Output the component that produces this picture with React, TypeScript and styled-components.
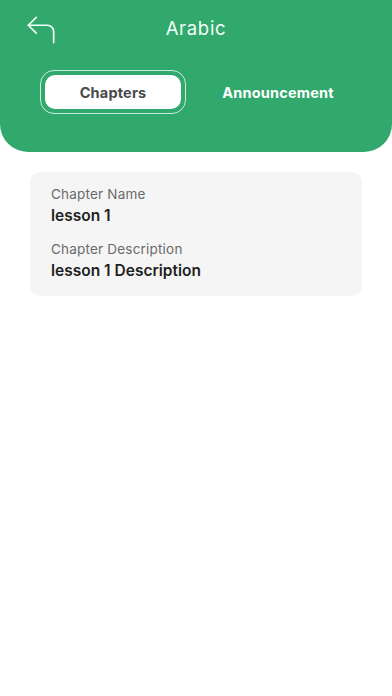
import React, { useState } from "react";
import styled, { createGlobalStyle } from "styled-components";
import { CornerUpLeft } from "lucide-react";

const GlobalStyle = createGlobalStyle`
  html, body {
    margin: 0;
    padding: 0;
    background: #ffffff;
    font-family: "Inter", "Noto Sans", sans-serif;
  }
  * { box-sizing: border-box; }
`;

const Page = styled.div`
  width: 100%;
  min-height: 696px;
  background: #ffffff;
`;

const Header = styled.header`
  background: #31a86c;
  height: 152px;
  border-radius: 0 0 28px 28px;
  padding-top: 8px;
`;

const TopBar = styled.div`
  position: relative;
  height: 40px;
  display: flex;
  align-items: center;
  justify-content: center;
`;

const BackButton = styled.button`
  position: absolute;
  left: 22px;
  top: 3px;
  background: none;
  border: none;
  padding: 0;
  color: #f2fff8;
  display: flex;
  cursor: pointer;
`;

const Title = styled.h1`
  margin: 0;
  font-size: 18.5px;
  font-weight: 400;
  color: #f4fff9;
  letter-spacing: 0.7px;
`;

const Tabs = styled.div`
  display: flex;
  gap: 19px;
  padding: 0 41px 0 40px;
  margin-top: 22px;
`;

const Tab = styled.button<{ $active: boolean }>`
  flex: 1;
  height: 44px;
  border-radius: 14px;
  border: 1.5px solid ${(p) => (p.$active ? "rgba(255,255,255,0.75)" : "transparent")};
  background: transparent;
  padding: 4px;
  cursor: pointer;
  font-family: "Inter", "Noto Sans", sans-serif;
`;

const TabLabel = styled.span<{ $active: boolean }>`
  display: flex;
  align-items: center;
  justify-content: center;
  height: 100%;
  border-radius: 10px;
  background: ${(p) => (p.$active ? "#ffffff" : "transparent")};
  color: ${(p) => (p.$active ? "#4a4a4a" : "#ffffff")};
  font-size: 14.5px;
  font-weight: 700;
  letter-spacing: 0.2px;
`;

const Content = styled.main`
  padding: 20px 30px;
`;

const Card = styled.section`
  background: #f5f5f5;
  border-radius: 10px;
  padding: 14px 21px 16px;
  display: flex;
  flex-direction: column;
  gap: 16px;
`;

const Field = styled.div`
  display: flex;
  flex-direction: column;
  gap: 4px;
`;

const Label = styled.span`
  font-size: 13.5px;
  color: #6a6a6a;
  letter-spacing: 0.2px;
`;

const Value = styled.span`
  font-size: 15.5px;
  font-weight: 600;
  color: #1f1f1f;
`;

const App = () => {
  const [tab, setTab] = useState<"chapters" | "announcement">("chapters");

  return (
    <Page>
      <GlobalStyle />
      <Header>
        <TopBar>
          <BackButton aria-label="Back">
            <CornerUpLeft size={38} strokeWidth={1.05} />
          </BackButton>
          <Title>Arabic</Title>
        </TopBar>
        <Tabs>
          <Tab $active={tab === "chapters"} onClick={() => setTab("chapters")}>
            <TabLabel $active={tab === "chapters"}>Chapters</TabLabel>
          </Tab>
          <Tab $active={tab === "announcement"} onClick={() => setTab("announcement")}>
            <TabLabel $active={tab === "announcement"}>Announcement</TabLabel>
          </Tab>
        </Tabs>
      </Header>
      <Content>
        <Card>
          <Field>
            <Label>Chapter Name</Label>
            <Value>lesson 1</Value>
          </Field>
          <Field>
            <Label>Chapter Description</Label>
            <Value>lesson 1 Description</Value>
          </Field>
        </Card>
      </Content>
    </Page>
  );
};

export default App;
